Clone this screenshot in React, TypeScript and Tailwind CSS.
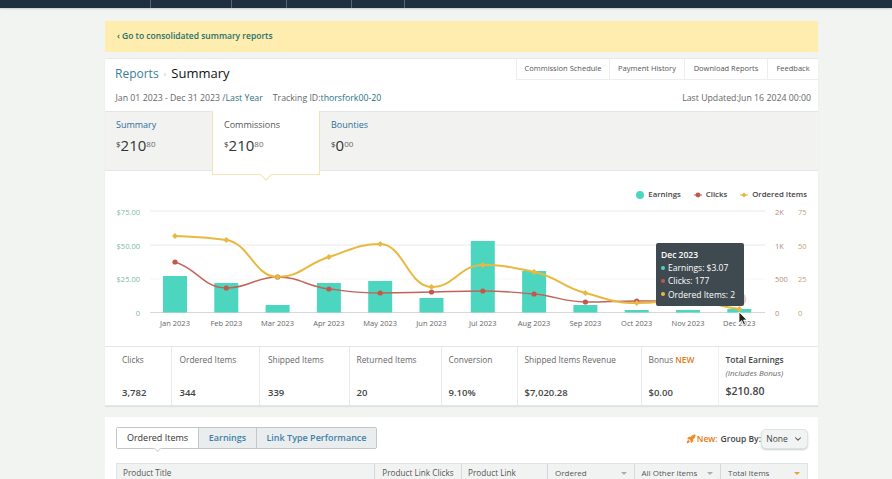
import React from "react";
import { ChevronDown, Rocket } from "lucide-react";

const months = ["Jan", "Feb", "Mar", "Apr", "May", "Jun", "Jul", "Aug", "Sep", "Oct", "Nov", "Dec"];
const xs = months.map((_, i) => 175 + i * 51.3);
const barTops = [276, 283, 305, 283, 281, 298, 241, 271, 305, 310, 310, 309];
const clicks = [262, 288, 277, 289, 293, 292, 291, 294, 302, 301, 301, 299];
const ordered = [236, 240, 277, 257, 244, 287, 265, 272, 293, 303, 300, 309];

// monotone curve through the points, like the chart lib draws it
const curve = (ys: number[]) => {
  const last = ys.length - 1;
  const slopes = ys.map((y, i) => {
    if (i === 0) return (ys[1] - y) * 0.6;
    if (i === last) return (y - ys[last - 1]) * 0.6;
    const a = y - ys[i - 1];
    const b = ys[i + 1] - y;
    return a * b <= 0 ? 0 : (2 * a * b) / (a + b);
  });
  let d = `M${xs[0]} ${ys[0]}`;
  for (let i = 1; i < ys.length; i++) {
    const dx = 51.3 * 0.45;
    d += ` C${xs[i - 1] + dx} ${ys[i - 1] + slopes[i - 1] * 0.45} ${xs[i] - dx} ${ys[i] - slopes[i] * 0.45} ${xs[i]} ${ys[i]}`;
  }
  return d;
};

const stats = [
  { label: "Clicks", value: "3,782", box: "w-[67px] pl-[17px]" },
  { label: "Ordered Items", value: "344", box: "w-[88px] pl-[7.5px]" },
  { label: "Shipped Items", value: "339", box: "w-[89.5px] pl-[8px]" },
  { label: "Returned Items", value: "20", box: "w-[92.5px] pl-[7px]" },
  { label: "Conversion", value: "9.10%", box: "w-[75.5px] pl-[6.5px]" },
  { label: "Shipped Items Revenue", value: "$7,020.28", box: "w-[124.5px] pl-[7px]" },
];

const Money = ({ whole, cents }: { whole: string; cents: string }) => (
  <div className="mt-[4px] flex items-start text-[#333]">
    <span className="mt-[3px] text-[8px] leading-[10px]">$</span>
    <span className="text-[15px] leading-[18px]">{whole}</span>
    <span className="mt-[3px] text-[8px] leading-[10px] text-[#666]">{cents}</span>
  </div>
);

const Chart = () => (
  <svg viewBox="105 201 713 145" className="block h-[145px] w-[713px]" fontFamily="'Open Sans', sans-serif">
    {[211, 245, 279, 312.5].map((y, i) => (
      <line key={y} x1="150" x2="765" y1={y} y2={y} stroke={i === 2 ? "#f3f5f3" : i === 3 ? "#d5d8d8" : "#e6e8e8"} strokeWidth="1" />
    ))}
    {["$75.00", "$50.00", "$25.00", "0"].map((t, i) => (
      <text key={t} x="140" y={[215, 248.5, 282, 315.5][i]} textAnchor="end" fontSize="7.5" fill="#7fb8a4">{t}</text>
    ))}
    {["2K", "1K", "500", "0"].map((t, i) => (
      <text key={t} x="775" y={[215, 248.5, 282, 315.5][i]} fontSize="7.5" fill="#b98a7a">{t}</text>
    ))}
    {["75", "50", "25", "0"].map((t, i) => (
      <text key={t} x="798" y={[215, 248.5, 282, 315.5][i]} fontSize="7.5" fill="#c2a56e">{t}</text>
    ))}
    {xs.map((x, i) => (
      <rect key={x} x={x - 12} y={barTops[i]} width="24" height={312.5 - barTops[i]} fill="#4dd6bf" />
    ))}
    <path d={curve(clicks)} fill="none" stroke="#c0645a" strokeWidth="1.4" />
    <path d={curve(ordered)} fill="none" stroke="#e9b93f" strokeWidth="2" />
    <circle cx={xs[11]} cy={clicks[11]} r="7" fill="#c0564c" opacity="0.3" />
    {xs.map((x, i) => (
      <circle key={x} cx={x} cy={clicks[i]} r="2.6" fill="#c4574c" />
    ))}
    {xs.map((x, i) => (
      <path key={x} d={`M${x} ${ordered[i] - 3} L${x + 3} ${ordered[i]} L${x} ${ordered[i] + 3} L${x - 3} ${ordered[i]} Z`} fill="#e9b93f" />
    ))}
    {months.map((m, i) => (
      <text key={m} x={xs[i]} y="326" textAnchor="middle" fontSize="7.5" fill="#666">{m} 2023</text>
    ))}
  </svg>
);

const SortArrow = ({ on }: { on?: boolean }) => (
  <svg width="6" height="3" viewBox="0 0 8 4" className="mr-[7px]">
    <path d="M0 0H8L4 4Z" fill={on ? "#e6a23c" : "#a9afaf"} />
  </svg>
);

export default function App() {
  return (
    <div className="h-[479px] w-[892px] overflow-hidden bg-[#f2f4f2] font-['Open_Sans','Noto_Sans',sans-serif] text-[#444]">
      <div className="flex h-2 bg-[#1f3040] pl-[105px] shadow-[0_1px_2px_#c5cccc]">
        {[46, 81, 55, 65, 53].map((w) => (
          <div key={w} className="border-r border-[#5a6670]" style={{ width: w }} />
        ))}
      </div>

      <div className="ml-[105px] mt-[13px] w-[713px]">
        <div className="flex h-[31px] items-center bg-[#feedaf] pl-[12px] text-[8.5px] font-semibold text-[#1f6f6a]">
          ‹ Go to consolidated summary reports
        </div>

        <div className="mt-[6px] border-t border-[#e8eaea] bg-white shadow-[0_1px_1px_#dfe2e2]">
          <div className="flex h-[52px] flex-col">
            <div className="flex h-[21px] justify-between">
              <div className="flex items-center pl-[10px] pt-[8px]">
                <span className="text-[12px] text-[#3a8094]">Reports</span>
                <span className="mx-[5px] text-[9px] text-[#c5c9c9]">›</span>
                <span className="text-[13px] text-[#111]">Summary</span>
              </div>
              <div className="flex text-[7.5px] text-[#555]">
                <div className="flex w-[94px] items-center justify-center border-b border-l border-r border-[#eceeee]">Commission Schedule</div>
                <div className="flex w-[75px] items-center justify-center border-b border-r border-[#eceeee]">Payment History</div>
                <div className="flex w-[83px] items-center justify-center border-b border-r border-[#eceeee]">Download Reports</div>
                <div className="flex w-[50px] items-center justify-center border-b border-[#eceeee]">Feedback</div>
              </div>
            </div>
            <div className="mt-[12px] flex items-center justify-between pl-[10.5px] pr-[7px] text-[8.75px] text-[#666]">
              <div>
                Jan 01 2023 - Dec 31 2023 /<span className="text-[#2a7184]">Last Year</span>
                <span className="ml-[10px]">Tracking ID:</span>
                <span className="text-[#2a7184]">thorsfork00-20</span>
              </div>
              <div>Last Updated:Jun 16 2024 00:00</div>
            </div>
          </div>

          <div className="flex h-[60px] border-y border-[#e5e7e7] bg-[#f2f3f1]">
            <div className="w-[107px] pl-[11px] pt-[6px] text-[9px] text-[#2e6c9c]">
              Summary
              <Money whole="210" cents="80" />
            </div>
            <div className="relative z-10 h-[64px] w-[108px] -translate-y-px border-x border-b border-[#f5e3b0] bg-white pl-[11px] pt-[7px] text-[9px] text-[#555]">
              Commissions
              <Money whole="210" cents="80" />
              <div className="absolute bottom-[-5px] left-[49px] size-[8px] rotate-45 border-b border-r border-[#f5e3b0] bg-white" />
            </div>
            <div className="pl-[11px] pt-[6px] text-[9px] text-[#2e6c9c]">
              Bounties
              <Money whole="0" cents="00" />
            </div>
          </div>

          <div className="relative h-[175px]">
            <div className="flex h-[30px] items-end justify-end gap-[13px] pr-[11px] text-[7.8px] font-semibold text-[#444]">
              <div className="flex items-center gap-[4px]">
                <span className="size-[8px] rounded-full bg-[#4dd6bf]" />
                Earnings
              </div>
              <div className="flex items-center gap-[4px]">
                <svg width="8" height="6" viewBox="0 0 8 6"><path d="M0 3H8" stroke="#c4574c" /><circle cx="4" cy="3" r="2.4" fill="#c4574c" /></svg>
                Clicks
              </div>
              <div className="flex items-center gap-[4px]">
                <svg width="8" height="6" viewBox="0 0 8 6"><path d="M0 3H8" stroke="#e9b93f" /><path d="M4 .5L6.5 3L4 5.5L1.5 3Z" fill="#e9b93f" /></svg>
                Ordered Items
              </div>
            </div>
            <Chart />
            <div className="absolute left-[551px] top-[72px] h-[63px] w-[88px] rounded-[2px] bg-[#3f4a50] px-[5px] pt-[5px] text-[8.5px] leading-[13.2px] text-white">
              <div className="font-semibold">Dec 2023</div>
              <div className="flex items-center gap-[3px]"><span className="size-[4px] rounded-full bg-[#4dd6bf]" />Earnings: $3.07</div>
              <div className="flex items-center gap-[3px]"><span className="size-[4px] rounded-full bg-[#c4574c]" />Clicks: 177</div>
              <div className="flex items-center gap-[3px] whitespace-nowrap"><span className="size-[4px] rounded-full bg-[#e9b93f]" />Ordered Items: 2</div>
            </div>
            <svg width="10" height="15" viewBox="0 0 10 15" className="absolute left-[633px] top-[140px]">
              <path d="M1 1V12L3.7 9.6L5.7 14L7.5 13.2L5.6 9H9Z" fill="#222" stroke="#fff" strokeWidth="0.8" />
            </svg>
          </div>

          <div className="flex h-[60px] border-y border-[#e5e7e7] text-[8.35px]">
            {stats.map((s) => (
              <div key={s.label} className={`${s.box} flex flex-col justify-between border-r border-[#e8eaea] pb-[5px] pt-[7px]`}>
                <div className="text-[#666]">{s.label}</div>
                <div className="text-[9.5px] font-semibold text-[#444]">{s.value}</div>
              </div>
            ))}
            <div className="flex w-[76.5px] flex-col justify-between border-r border-[#f0f1f1] pb-[5px] pl-[6.5px] pt-[7px]">
              <div className="text-[#666]">Bonus <span className="font-semibold text-[#e47911]">NEW</span></div>
              <div className="text-[9.5px] font-semibold">$0.00</div>
            </div>
            <div className="flex flex-1 flex-col pl-[7px] pt-[7px]">
              <div className="text-[8.5px] font-semibold">Total Earnings</div>
              <div className="text-[8px] italic text-[#666]">(Includes Bonus)</div>
              <div className="mt-[5px] text-[10.5px] font-semibold">$210.80</div>
            </div>
          </div>
        </div>

        <div className="mt-[11px] h-[80px] bg-white px-[11px] pt-[10px]">
          <div className="flex h-[22px] items-start justify-between">
            <div className="relative flex h-[21.5px] rounded-[2px] border border-[#c3c7c7] text-[9px]">
              <div className="flex w-[82px] items-center justify-center border-r border-[#c3c7c7] bg-white text-[#333]">Ordered Items</div>
              <div className="flex w-[58px] items-center justify-center border-r border-[#c3c7c7] bg-[#e9eded] font-semibold text-[#3f7fab]">Earnings</div>
              <div className="flex w-[119px] items-center justify-center bg-[#e9eded] font-semibold text-[#3f7fab]">Link Type Performance</div>
              <div className="absolute bottom-[-3px] left-[38px] size-[5px] rotate-45 border-b border-r border-[#d5d8d8] bg-white" />
            </div>
            <div className="-mr-px mt-[2px] flex items-center text-[8.5px] font-semibold">
              <Rocket size={10} className="mr-[1px] fill-[#ef8a2b] text-[#ef8a2b]" />
              <span className="text-[#e47911]">New:</span>
              <span className="ml-[3px]">Group By:</span>
              <div className="flex h-[20px] w-[47px] items-center justify-center gap-[5px] rounded-[5px] border border-[#dfe3e3] bg-[#f2f4f3] font-normal shadow-[0_1px_2px_#c9cdcd]">
                None
                <ChevronDown size={10} strokeWidth={2.5} />
              </div>
            </div>
          </div>
          <div className="mt-[14px] flex h-[20px] w-[692px] border border-[#e0e3e3] bg-[#f1f3f2] text-[8.2px] font-medium text-[#555]">
            <div className="flex w-[258px] items-center border-r border-[#d5d8d8] pl-[6px]">Product Title</div>
            <div className="flex w-[87px] items-center justify-center border-r border-[#d5d8d8]">Product Link Clicks</div>
            <div className="flex w-[86px] items-center border-r border-[#d5d8d8] pl-[6px]">Product Link</div>
            <div className="flex w-[86.5px] items-center justify-between border-r border-[#d5d8d8] pl-[7px] text-[8px] font-normal">Ordered<SortArrow /></div>
            <div className="flex w-[86.5px] items-center justify-between border-r border-[#d5d8d8] pl-[7px] text-[8px] font-normal">All Other Items<SortArrow /></div>
            <div className="flex flex-1 items-center justify-between pl-[7px] text-[8px] font-normal">Total Items<SortArrow on /></div>
          </div>
        </div>
      </div>
    </div>
  );
}
